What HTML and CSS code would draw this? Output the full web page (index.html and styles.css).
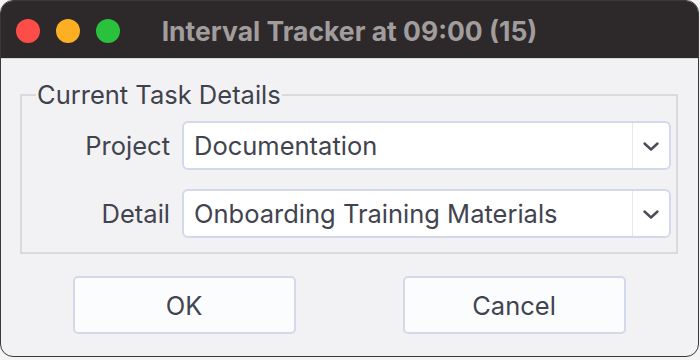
FILE: index.html
```html
<!DOCTYPE html>
<html>
<head>
<meta charset="utf-8">
<link rel="stylesheet" href="styles.css">
</head>
<body>
<div class="window">
  <div class="titlebar">
    <div class="lights">
      <span class="light red"></span>
      <span class="light yellow"></span>
      <span class="light green"></span>
    </div>
    <div class="title">Interval Tracker at 09:00 (15)</div>
  </div>
  <div class="content">
    <fieldset class="group">
      <legend class="legend">Current Task Details</legend>
      <div class="rows">
        <label class="label">Project</label>
        <div class="select">
          <span class="value">Documentation</span>
          <span class="arrow"><svg width="18" height="11" viewBox="0 0 18 11"><path d="M2.5 2.5 L9 8.5 L15.5 2.5" fill="none" stroke="#4a4d57" stroke-width="2.4" stroke-linecap="round" stroke-linejoin="round"/></svg></span>
        </div>
        <label class="label">Detail</label>
        <div class="select">
          <span class="value">Onboarding Training Materials</span>
          <span class="arrow"><svg width="18" height="11" viewBox="0 0 18 11"><path d="M2.5 2.5 L9 8.5 L15.5 2.5" fill="none" stroke="#4a4d57" stroke-width="2.4" stroke-linecap="round" stroke-linejoin="round"/></svg></span>
        </div>
      </div>
    </fieldset>
    <div class="buttons">
      <button class="btn">OK</button>
      <button class="btn">Cancel</button>
    </div>
  </div>
</div>
</body>
</html>
```
FILE: styles.css
```css
html, body {
  margin: 0;
  padding: 0;
  background: #f4f4f4;
}
body {
  width: 700px;
  height: 360px;
  overflow: hidden;
  font-family: Inter, "Noto Sans", sans-serif;
}
.window {
  box-sizing: border-box;
  width: 699px;
  height: 357px;
  border: 1px solid #3b3838;
  border-radius: 13px;
  background: #f2f2f4;
  overflow: hidden;
  display: flex;
  flex-direction: column;
}
.titlebar {
  height: 57px;
  flex: none;
  background: #2d292a;
  border-bottom: 1px solid #d6d6d6;
  display: flex;
  align-items: center;
  position: relative;
}
.lights {
  display: flex;
  gap: 16px;
  padding-left: 15px;
  padding-top: 3px;
}
.light {
  width: 24px;
  height: 24px;
  border-radius: 50%;
  display: block;
}
.red { background: #fe4d48; }
.yellow { background: #fdaf24; }
.green { background: #2ac23d; }
.title {
  position: absolute;
  left: 0;
  right: 0;
  top: 0;
  bottom: 0;
  display: flex;
  align-items: center;
  justify-content: center;
  padding-top: 3px;
  color: #a29d9d;
  font-weight: 700;
  font-size: 26.5px;
  pointer-events: none;
}
.content {
  flex: 1;
  display: flex;
  flex-direction: column;
  padding: 25px 20px 0 19px;
}
.group {
  margin: 0;
  border: 2px solid #dadadc;
  padding: 15px 5px 14px 0;
}
.legend {
  font-size: 25.5px;
  color: #3f424c;
  padding: 0 1px;
  margin-left: 14px;
  line-height: 22px;
}
.rows {
  display: grid;
  grid-template-columns: 148px 1fr;
  column-gap: 12px;
  row-gap: 19px;
  align-items: center;
}
.label {
  text-align: right;
  font-size: 25.5px;
  color: #41444e;
}
.select {
  height: 49px;
  box-sizing: border-box;
  background: #ffffff;
  border: 2px solid #d3d9ea;
  border-radius: 6px;
  display: flex;
  align-items: center;
}
.value {
  flex: 1;
  font-size: 25.5px;
  color: #41444e;
  padding-left: 10px;
}
.arrow {
  width: 37px;
  height: 100%;
  border-left: 1px solid #e6e8ee;
  display: flex;
  align-items: center;
  justify-content: center;
  padding-top: 1px;
  box-sizing: border-box;
}
.buttons {
  display: flex;
  justify-content: center;
  gap: 107px;
  margin-top: 22px;
}
.btn {
  width: 223px;
  height: 58px;
  background: #fbfcfd;
  border: 2px solid #d3d9ea;
  border-radius: 5px;
  font-family: Inter, "Noto Sans", sans-serif;
  font-size: 25.5px;
  color: #41444e;
}
```
